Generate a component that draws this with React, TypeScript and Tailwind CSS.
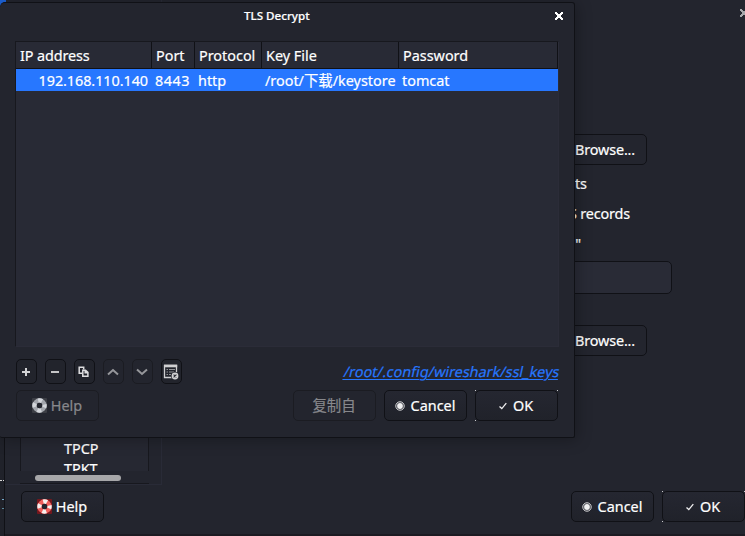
import type { ReactNode } from "react";

function LifeRing({ muted = false }: { muted?: boolean }) {
  return (
    <svg className="shrink-0" width="15" height="15" viewBox="0 0 15 15">
      <rect width="15" height="15" rx="1" fill={muted ? "#3c3e45" : "#74181e"} />
      <circle cx="7.5" cy="7.5" r="5" fill="none" stroke={muted ? "#a2a5ac" : "#f0605d"} strokeWidth="4.4" />
      <circle
        cx="7.5"
        cy="7.5"
        r="5"
        fill="none"
        stroke={muted ? "#d3d6db" : "#f6f1ef"}
        strokeWidth="4.4"
        strokeDasharray="3.927"
        strokeDashoffset="1.963"
      />
      <circle cx="7.5" cy="7.5" r="2.7" fill="#23252e" />
    </svg>
  );
}

function CancelIcon() {
  return (
    <svg className="shrink-0" width="10" height="10" viewBox="0 0 10 10">
      <circle cx="5" cy="5" r="4.2" fill="none" stroke="#dedee0" strokeWidth="1" />
      <circle cx="5" cy="5" r="2.9" fill="#f0f0f1" />
    </svg>
  );
}

function CheckIcon() {
  return (
    <svg className="shrink-0" width="10" height="10" viewBox="0 0 10 10">
      <path d="M1.5 5.5 3.8 7.6 8.3 2.2" fill="none" stroke="#eeeeef" strokeWidth="1.3" />
    </svg>
  );
}

function CloseIcon() {
  return (
    <svg width="8" height="8" viewBox="0 0 8 8">
      <path d="M0 0h2v1h1v1h2V1h1V0h2v2H7v1H6v2h1v1h1v2H6V7H5V6H3v1H2v1H0V6h1V5h1V3H1V2H0Z" fill="white" />
    </svg>
  );
}

function Button({ children, disabled = false, focused = false }: { children: ReactNode; disabled?: boolean; focused?: boolean }) {
  return (
    <div
      className={`relative flex h-[31px] w-[83px] shrink-0 items-center justify-center rounded-[5px] border pr-px text-[14.4px] leading-5 ${
        disabled ? "border-[#1b1c22] text-[#87888c]" : "border-[#101116] bg-linear-to-b from-[#252731] to-[#20222a] text-white"
      }`}
    >
      {children}
      {focused && (
        <>
          <i className="absolute -top-px -left-px h-px w-px bg-[#c8c8ca]" />
          <i className="absolute -top-px -right-px h-px w-px bg-[#c8c8ca]" />
          <i className="absolute -bottom-px -left-px h-px w-px bg-[#c8c8ca]" />
        </>
      )}
    </div>
  );
}

function Tool({ children, disabled = false }: { children: ReactNode; disabled?: boolean }) {
  return (
    <div
      className={`flex h-[25px] w-[21px] items-center justify-center rounded-[5px] border ${
        disabled ? "border-[#1b1c22]" : "border-[#101116] bg-[#22242c]"
      }`}
    >
      {children}
    </div>
  );
}

function Actions() {
  return (
    <>
      <Button>
        <CancelIcon />
        <span className="ml-[6px]">Cancel</span>
      </Button>
      <Button focused>
        <CheckIcon />
        <span className="mr-px ml-[5px]">OK</span>
      </Button>
    </>
  );
}

function BrowseButton() {
  return (
    <div className="flex h-[31px] w-[485px] items-center justify-end rounded-[5px] border border-[#101116] pr-[11px] tracking-[-0.15px]">
      Browse...
    </div>
  );
}

function Preferences() {
  return (
    <div className="absolute inset-y-0 left-1 flex w-[741px] flex-col border-l border-[#101116] bg-[#23252e]">
      <div className="flex h-[485px]">
        <div className="flex h-full w-[157px] flex-col justify-end border-r border-b border-[#292b37] pl-[15px]">
          <div className="h-[78px] w-[129px] overflow-hidden border-x border-[#17181e] bg-[#262832] pl-[43px] text-[14.4px] leading-[20px] text-white">
            <div className="mt-[46px]">TPCP</div>
            <div>TPKT</div>
          </div>
          <div className="flex h-[13px] w-[129px] items-center border-b border-[#17181e] pt-[2px] pl-[15px]">
            <div className="h-[6px] w-[86px] rounded-full bg-[#a7a7a9]" />
          </div>
        </div>
        <div className="flex flex-1 flex-col items-start pt-[134px] text-[14.4px] leading-5 text-white">
          <BrowseButton />
          <div className="mt-[9px] w-[425px] text-right">ts</div>
          <div className="mt-[10px] w-[468px] text-right tracking-[-0.15px]">S records</div>
          <div className="mt-[10px] w-[419px] text-right">"</div>
          <div className="mt-[7px] h-[33px] w-[510px] rounded-[5px] border border-[#101116] bg-[#292b36]" />
          <div className="mt-[31px]">
            <BrowseButton />
          </div>
        </div>
        <div className="flex w-[5px] justify-start overflow-hidden pt-[9px] opacity-60">
          <div className="shrink-0"><CloseIcon /></div>
        </div>
      </div>
      <div className="flex pt-[6px] pl-4">
        <Button>
          <LifeRing />
          <span className="ml-[4px]">Help</span>
        </Button>
        <div className="ml-[467px] flex gap-2">
          <Actions />
        </div>
      </div>
      <div className="mt-auto h-[2px] bg-[#1c1b22]" />
    </div>
  );
}

function DecryptDialog() {
  return (
    <div className="absolute top-0.5 left-0 flex h-[436px] w-[575px] flex-col rounded-tl-[5px] rounded-tr-[3px] rounded-b-[2px] border-t border-r border-b border-[#101116] bg-[#23252e] shadow-[2px_2px_15px_rgba(0,0,0,0.28)]">
      <div className="flex h-[38px] items-start pt-[4px]">
        <div className="flex-1 pl-[244px] text-[11.6px] leading-[18px] font-medium text-white">TLS Decrypt</div>
        <div className="mt-[5px] mr-[11px]"><CloseIcon /></div>
      </div>
      <div className="ml-[15px] flex h-[306px] w-[544px] flex-col border-t border-r border-b border-l border-t-[#17181e] border-r-[#2b2c38] border-b-[#2b2c38] border-l-[#17181e] bg-[#282a35] text-[14.4px] text-white">
        <div className="grid h-[27px] w-[542px] shrink-0 grid-cols-[136px_43px_67px_137px_159px] border-b border-[#101116] text-[14.4px] leading-[27px] *:border-r *:border-[#101116] *:pl-1 *:whitespace-nowrap">
          <span className="tracking-[-0.1px]">IP address</span>
          <span>Port</span>
          <span>Protocol</span>
          <span>Key File</span>
          <span>Password</span>
        </div>
        <div className="grid h-[22px] shrink-0 grid-cols-[136px_43px_67px_137px_159px] bg-[#2777ff] pt-px leading-[22px] *:pl-[3px] *:whitespace-nowrap">
          <span className="pr-1 text-right tracking-[-0.06px]">192.168.110.140</span>
          <span className="tracking-[0.5px]">8443</span>
          <span>http</span>
          <span>/root/下载/keystore</span>
          <span>tomcat</span>
        </div>
      </div>
      <div className="mt-[12px] ml-4 flex h-[25px] w-[543px] items-center gap-2">
        <Tool>
          <svg className="mr-px" width="10" height="10" viewBox="0 0 10 10"><path d="M1 5h8M5 1v8" stroke="#d3d3d5" strokeWidth="2" /></svg>
        </Tool>
        <Tool>
          <svg className="mr-px" width="10" height="10" viewBox="0 0 10 10"><path d="M1 5h8" stroke="#c5c5c7" strokeWidth="2" /></svg>
        </Tool>
        <Tool>
          <svg className="mr-0.5" width="11" height="11" viewBox="0 0 11 11" fill="none" stroke="#dedee0" strokeWidth="1.5">
            <path d="M4 7.2H1.2V1.2H5.7V3.5" />
            <path d="M4.8 4.2H7.5L9.9 6.4V10.2H4.8ZM7.2 4.2V6.8H9.9" />
          </svg>
        </Tool>
        <Tool disabled>
          <svg className="mr-px" width="12" height="8" viewBox="0 0 12 8"><path d="M1 6.5 6 2 11 6.5" fill="none" stroke="#96979b" strokeWidth="2" /></svg>
        </Tool>
        <Tool disabled>
          <svg className="mr-px" width="12" height="8" viewBox="0 0 12 8"><path d="M1 1.5 6 6 11 1.5" fill="none" stroke="#96979b" strokeWidth="2" /></svg>
        </Tool>
        <Tool>
          <svg className="mr-px shrink-0" width="16" height="16" viewBox="0 0 16 16" fill="none">
            <path d="M9 13.5H1.5V1.5H13.5V8.5" stroke="#cfcfd1" strokeWidth="1.3" />
            <path d="M1 2H14.2" stroke="#cfcfd1" strokeWidth="2.6" />
            <path d="M3.5 5.5H5M6 5.5H12M3.5 8H5M6 8H11M3.5 10.5H5M6 10.5H8" stroke="#929397" />
            <circle cx="12" cy="12" r="4" fill="#23252e" />
            <circle cx="12" cy="12" r="3.4" fill="#d2d2d4" />
            <path d="m10.6 10.6 2.8 2.8m0-2.8-2.8 2.8" stroke="#292b33" strokeWidth="1.1" />
          </svg>
        </Tool>
        <span className="ml-auto -skew-x-12 text-[14.4px] leading-5 whitespace-nowrap text-[#2777ff] underline decoration-1 underline-offset-2">
          /root/.config/wireshark/ssl_keys
        </span>
      </div>
      <div className="mt-[6px] ml-4 flex">
        <Button disabled>
          <LifeRing muted />
          <span className="ml-[4px]">Help</span>
        </Button>
        <div className="ml-[194px] flex gap-2">
          <Button disabled>复制自</Button>
          <Actions />
        </div>
      </div>
    </div>
  );
}

export default function App() {
  return (
    <main className="relative h-[536px] w-[745px] overflow-hidden bg-[#20222a] font-['Noto_Sans','Noto_Sans_CJK_SC',sans-serif] [-webkit-text-stroke:0.2px]">
      <div className="absolute top-[480px] left-0 w-1 overflow-hidden">
        <div className="border-t border-dotted border-[#d8d8d8]" />
        <div className="mt-[18px] ml-0.5 h-px w-0.5 bg-[#74a9cc]" />
        <div className="mt-[8px] ml-0.5 h-px w-0.5 bg-[#5b879c]" />
      </div>
      <Preferences />
      <div className="absolute top-0 left-0 h-[6px] w-[6px] bg-[#1d61d4]" />
      <DecryptDialog />
    </main>
  );
}
